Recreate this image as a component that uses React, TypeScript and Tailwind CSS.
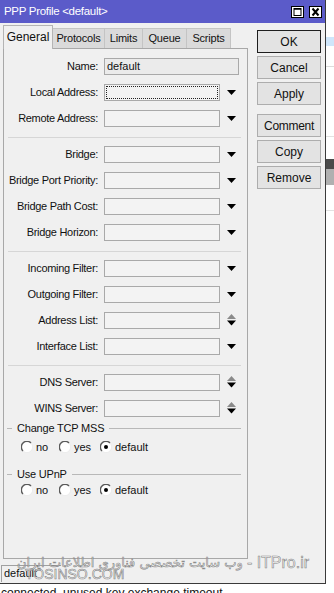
import React from "react";

type Row = {
  label: string;
  value?: string;
  wide?: boolean;
  focus?: boolean;
  kind?: "down" | "spin";
};

const groups: Row[][] = [
  [
    { label: "Name:", value: "default", wide: true },
    { label: "Local Address:", kind: "down", focus: true },
    { label: "Remote Address:", kind: "down" },
  ],
  [
    { label: "Bridge:", kind: "down" },
    { label: "Bridge Port Priority:", kind: "down" },
    { label: "Bridge Path Cost:", kind: "down" },
    { label: "Bridge Horizon:", kind: "down" },
  ],
  [
    { label: "Incoming Filter:", kind: "down" },
    { label: "Outgoing Filter:", kind: "down" },
    { label: "Address List:", kind: "spin" },
    { label: "Interface List:", kind: "down" },
  ],
  [
    { label: "DNS Server:", kind: "spin" },
    { label: "WINS Server:", kind: "spin" },
  ],
];

const tabs = ["General", "Protocols", "Limits", "Queue", "Scripts"];
const tabWidths = ["w-[50px]", "w-[52px]", "w-[38px]", "w-[44px]", "w-[44px]"];

function DownArrow() {
  return (
    <svg width="9" height="5" viewBox="0 0 9 5">
      <polygon points="0,0 9,0 4.5,5" fill="#000" />
    </svg>
  );
}

function Spinner() {
  return (
    <svg width="9" height="12" viewBox="0 0 9 12">
      <polygon points="0,5 9,5 4.5,0" fill="#8a8a8a" />
      <polygon points="0,6.5 9,6.5 4.5,11.5" fill="#000" />
    </svg>
  );
}

function Radio({ checked }: { checked?: boolean }) {
  return (
    <svg width="12" height="12" viewBox="0 0 12 12">
      <circle cx="6" cy="6" r="5.5" fill="#fff" />
      <path d="M10 2 A5.5 5.5 0 0 0 2 10" stroke="#5a5a5a" strokeWidth="1.4" fill="none" />
      <path d="M2 10 A5.5 5.5 0 0 0 10 2" stroke="#ececec" strokeWidth="1" fill="none" />
      {checked && <circle cx="6" cy="6" r="2" fill="#000" />}
    </svg>
  );
}

function Field({ row }: { row: Row }) {
  return (
    <div className="flex h-[26px] items-center">
      <span className="w-[94px] text-right tracking-[-0.3px]">{row.label}</span>
      <div
        className={
          "ml-[6px] h-[17px] border border-[#a9a9a9] p-px " +
          (row.wide ? "w-[135px] bg-[#ebebeb]" : "w-[116px] bg-[#f3f3f3]")
        }
      >
        {row.focus ? (
          <div className="h-full border border-dotted border-[#222]" />
        ) : (
          <div className="pl-[1px] leading-[13px]">{row.value}</div>
        )}
      </div>
      {row.kind && (
        <div className="ml-[7px] flex w-[9px] justify-center">
          {row.kind === "down" ? <DownArrow /> : <Spinner />}
        </div>
      )}
    </div>
  );
}

function GroupTitle({ text }: { text: string }) {
  return (
    <div className="flex h-[14px] items-center">
      <div className="ml-[3px] h-px w-[5px] bg-[#b8b8b8]" />
      <span className="px-[5px] tracking-[-0.2px]">{text}</span>
      <div className="mr-[6px] h-px flex-1 bg-[#b8b8b8]" />
    </div>
  );
}

function Radios() {
  return (
    <div className="flex h-[18px] items-center pl-[17px]">
      <div className="flex w-[38px] items-center gap-[3px]">
        <Radio />
        <span>no</span>
      </div>
      <div className="flex w-[41px] items-center gap-[3px]">
        <Radio />
        <span>yes</span>
      </div>
      <div className="flex items-center gap-[3px]">
        <Radio checked />
        <span>default</span>
      </div>
    </div>
  );
}

export default function App() {
  return (
    <div className="relative h-[593px] w-[334px] overflow-hidden bg-white font-['Liberation_Sans',Arial,sans-serif] text-[11px] text-[#111]">
      <div className="flex">
        <div className="flex h-[584px] w-[326px] flex-col border-r border-b border-[#3a3a3a] bg-[#f0f0f0]">
          {/* title bar */}
          <div className="flex h-[23px] items-center bg-[#5b5bc9] pl-[4px] pr-[3px] text-[11.5px] text-white">
            <span className="tracking-[-0.3px]">PPP Profile &lt;default&gt;</span>
            <div className="ml-auto flex gap-[5px]">
              <svg width="13" height="12" viewBox="0 0 13 12">
                <rect x="0.5" y="0.5" width="12" height="11" fill="#fff" stroke="#000" />
                <rect x="3" y="2.5" width="7" height="7" fill="none" stroke="#000" />
                <line x1="3" y1="3" x2="10" y2="3" stroke="#000" strokeWidth="1.5" />
              </svg>
              <svg width="13" height="12" viewBox="0 0 13 12">
                <rect x="0.5" y="0.5" width="12" height="11" fill="#fff" stroke="#000" />
                <path d="M3.5 2.5 L9.5 9.5 M9.5 2.5 L3.5 9.5" stroke="#000" strokeWidth="2" />
              </svg>
            </div>
          </div>

          <div className="flex flex-1">
            {/* tabs and panel */}
            <div className="flex w-[248px] flex-col pl-[3px]">
              <div className="flex h-[25px] items-end">
                {tabs.map((t, i) =>
                  i === 0 ? (
                    <div
                      key={t}
                      className={`relative z-10 mb-[-1px] flex h-[24px] ${tabWidths[i]} items-center justify-center border border-b-0 border-[#b4b4b4] bg-[#f0f0f0] pb-[2px] text-[12px]`}
                    >
                      {t}
                    </div>
                  ) : (
                    <div
                      key={t}
                      className={`flex h-[20px] ${tabWidths[i]} items-center justify-center border-t border-r border-[#c4c4c4] bg-[#dadada] tracking-[-0.2px]`}
                    >
                      {t}
                    </div>
                  )
                )}
              </div>

              <div className="flex flex-1 flex-col border border-[#a8a8a8] bg-[#f0f0f0] pt-[4px]">
                {groups.map((g, gi) => (
                  <div key={gi}>
                    {gi > 0 && <div className="mt-[6px] mb-[3px] ml-[4px] mr-[6px] h-px bg-[#d6d6d6]" />}
                    {g.map((r) => (
                      <Field key={r.label} row={r} />
                    ))}
                  </div>
                ))}
                <GroupTitle text="Change TCP MSS" />
                <div className="mt-[3px]">
                  <Radios />
                </div>
                <div className="mt-[11px]">
                  <GroupTitle text="Use UPnP" />
                </div>
                <Radios />
              </div>
            </div>

            {/* buttons */}
            <div className="ml-[9px] flex w-[64px] flex-col gap-[3px] pt-[7px] text-[12px]">
              <button className="h-[23px] border border-[#1e1e1e] bg-[#e3e3e3]">OK</button>
              <button className="h-[23px] border border-[#adadad] bg-[#e3e3e3]">Cancel</button>
              <button className="h-[23px] border border-[#adadad] bg-[#e3e3e3]">Apply</button>
              <button className="mt-[6px] h-[23px] border border-[#adadad] bg-[#e3e3e3] tracking-[-0.3px]">
                Comment
              </button>
              <button className="h-[23px] border border-[#adadad] bg-[#e3e3e3]">Copy</button>
              <button className="h-[23px] border border-[#adadad] bg-[#e3e3e3]">Remove</button>
            </div>
          </div>

          {/* status bar */}
          <div className="h-[24px] pt-[6px] pl-[1px]">
            <div className="h-[17px] w-[60px] border-t border-l border-[#a0a0a0] pl-[2px] leading-[15px]">
              default
            </div>
          </div>
        </div>

        {/* background application behind the window */}
        <div className="flex h-[584px] flex-1 flex-col">
          <div className="h-[37px]" />
          <div className="h-[9px] bg-[#cfe6fb]" />
          <div className="h-[21px] border-b border-[#dcdcdc]" />
          <div className="h-[70px] border-b border-[#e2e2e2]" />
          <div className="h-[22px]" />
          <div className="h-[10px] bg-[#4a4a4a]" />
          <div className="h-[16px] bg-[#b0b0b0]" />
          <div className="h-[26px] border-b border-[#e2e2e2]" />
        </div>
      </div>

      <div className="whitespace-nowrap pt-[2px] pl-[1px] text-[12px] leading-[14px] text-[#111]">
        connected, unused key exchange timeout
      </div>

      {/* watermark */}
      <div className="absolute left-[17px] top-[551px] flex items-center whitespace-nowrap text-white/60 [-webkit-text-stroke:0.6px_rgba(110,110,110,0.85)]">
        <span dir="rtl" className="font-['DejaVu_Sans',sans-serif] text-[13px]">
          وب سایت تخصصی فناوری اطلاعات ایران
        </span>
        <span className="ml-[4px] text-[16px]">- ITPro.ir</span>
      </div>
      <div className="absolute left-[25px] top-[564px] whitespace-nowrap text-[14px] text-white/60 [-webkit-text-stroke:0.6px_rgba(110,110,110,0.85)]">
        TOSINSO.COM
      </div>
    </div>
  );
}
